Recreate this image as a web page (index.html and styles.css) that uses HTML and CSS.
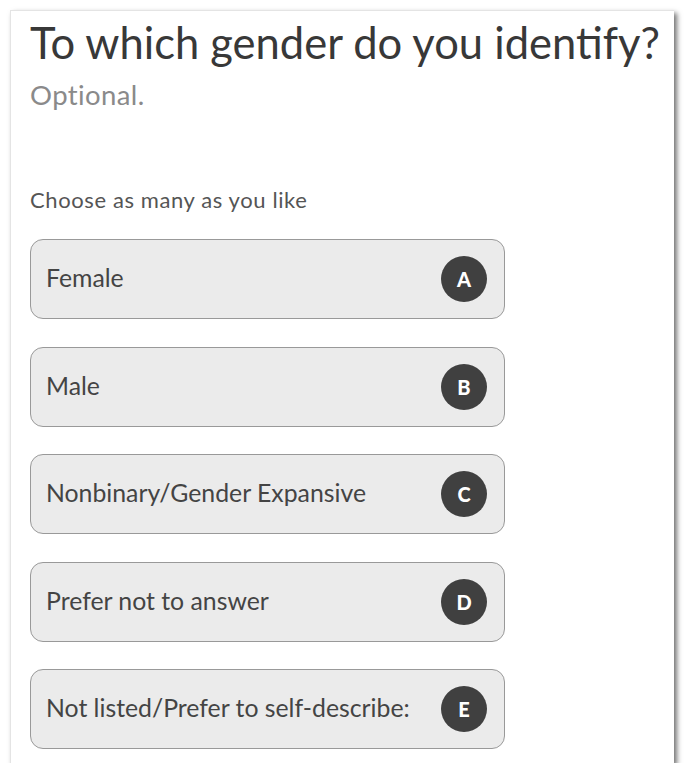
FILE: index.html
```html
<!DOCTYPE html>
<html>
<head>
<meta charset="utf-8">
<link rel="stylesheet" href="styles.css">
</head>
<body>
<div class="card">
  <h1 class="title">To which gender do you identify?</h1>
  <div class="optional">Optional.</div>
  <div class="hint">Choose as many as you like</div>
  <div class="options">
    <div class="option"><span class="label">Female</span><span class="key">A</span></div>
    <div class="option"><span class="label">Male</span><span class="key">B</span></div>
    <div class="option"><span class="label">Nonbinary/Gender Expansive</span><span class="key">C</span></div>
    <div class="option"><span class="label">Prefer not to answer</span><span class="key">D</span></div>
    <div class="option"><span class="label">Not listed/Prefer to self-describe:</span><span class="key">E</span></div>
  </div>
</div>
</body>
</html>
```
FILE: styles.css
```css
html, body { margin: 0; padding: 0; background: #fff; }
body { padding: 10px 0 0 10px; font-family: Lato, "Noto Sans", sans-serif; }
.card {
  width: 664px;
  height: 753px;
  box-sizing: border-box;
  background: #fff;
  border-top: 1px solid #e4e4e4;
  border-left: 1px solid #e4e4e4;
  box-shadow: 3px 3px 5px rgba(0,0,0,0.55);
  padding: 7px 0 0 19px;
  overflow: hidden;
}
.title {
  margin: 0;
  font-weight: 400;
  font-size: 43.5px;
  line-height: 48px;
  color: #383838;
  white-space: nowrap;
}
.optional {
  font-size: 27.5px;
  letter-spacing: 0.4px;
  line-height: 34px;
  color: #8a8a8a;
  margin-top: 12px;
}
.hint {
  margin-top: 75px;
  font-size: 22px;
  letter-spacing: 0.6px;
  line-height: 26px;
  color: #555;
}
.options {
  margin-top: 26px;
  display: flex;
  flex-direction: column;
  gap: 27.5px;
}
.option {
  width: 475px;
  height: 80px;
  box-sizing: border-box;
  border: 1px solid #999;
  border-radius: 13px;
  background: #ebebeb;
  display: flex;
  align-items: center;
  justify-content: space-between;
  padding: 0 17px 3px 15px;
}
.label {
  font-size: 24.8px;
  color: #444;
}
.key {
  width: 46px;
  height: 46px;
  margin-top: 3px;
  border-radius: 50%;
  background: #404040;
  color: #fff;
  font-weight: 900;
  font-size: 20px;
  display: flex;
  align-items: center;
  justify-content: center;
}
```
